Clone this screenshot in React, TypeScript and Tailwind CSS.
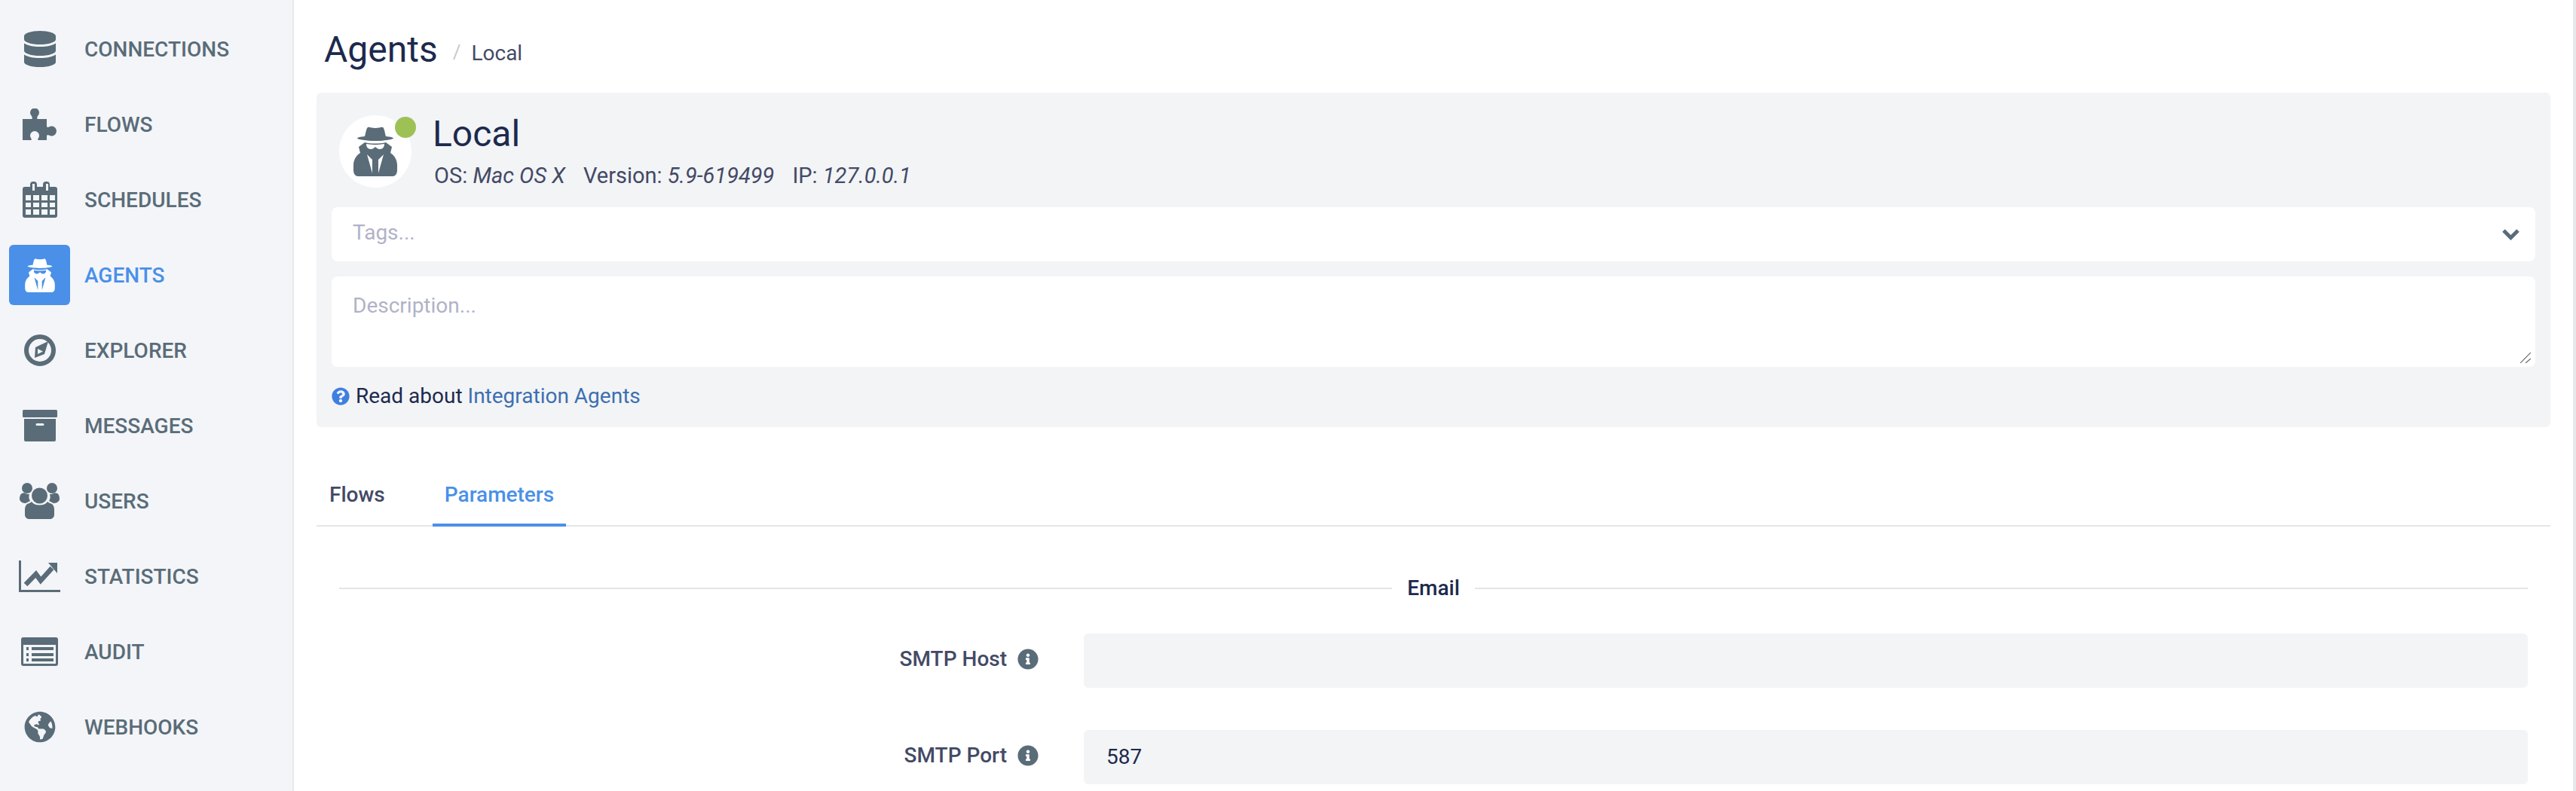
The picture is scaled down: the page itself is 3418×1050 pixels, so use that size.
import React from "react";
import { FaDatabase, FaGlobeAmericas, FaInfoCircle, FaQuestionCircle } from "react-icons/fa";

const Puzzle = () => (
  <svg width="46" height="42" viewBox="0 0 46 42" fill="currentColor">
    <path d="M0 14H12C13 14 13 12 12 10A6 6 0 1 1 20 10C19 12 19 14 20 14H32V24C32 25 34 25 35 24.500A6.500 6.500 0 1 1 35 35.500C34 35 32 35 32 36V42H21C20 42 20 41 20.500 40A6 6 0 1 0 11.500 40C12 41 12 42 11 42H0Z" />
  </svg>
);
const Calendar = () => (
  <svg width="46" height="48" viewBox="0 0 46 48" fill="currentColor">
    <path fillRule="evenodd" d="M3 7h7V4a4 4 0 0 1 4-4h1a4 4 0 0 1 4 4v3h8V4a4 4 0 0 1 4-4h1a4 4 0 0 1 4 4v3h7a3 3 0 0 1 3 3v35a3 3 0 0 1-3 3H3a3 3 0 0 1-3-3V10a3 3 0 0 1 3-3zM13 3v9h3V3h-3zM31 3v9h3V3h-3zM4 18v7h7v-7H4zm10 0v7h8v-7h-8zm11 0v7h8v-7h-8zm11 0v7h7v-7h-7zM4 28v6h7v-6H4zm10 0v6h8v-6h-8zm11 0v6h8v-6h-8zm11 0v6h7v-6h-7zM4 37v7h7v-7H4zm10 0v7h8v-7h-8zm11 0v7h8v-7h-8zm11 0v7h7v-7h-7z" />
  </svg>
);
const Compass = () => (
  <svg width="42" height="42" viewBox="0 0 42 42" fill="currentColor">
    <circle cx="21" cy="21" r="18" fill="none" stroke="currentColor" strokeWidth="6" />
    <path fillRule="evenodd" d="M14 31l1-14 17-8-5 17-13 5zm4-12v7l7-3.500-7-3.500z" />
  </svg>
);
const Archive = () => (
  <svg width="46" height="42" viewBox="0 0 46 42" fill="currentColor">
    <rect x="0" y="0" width="46" height="10" rx="1.500" />
    <path fillRule="evenodd" d="M2 12h42v28a2 2 0 0 1-2 2H4a2 2 0 0 1-2-2V12zm17 6a1.500 1.500 0 0 0 0 3h8a1.500 1.500 0 0 0 0-3h-8z" />
  </svg>
);
const Users = () => (
  <svg width="53" height="48" viewBox="0 0 53 48" fill="currentColor">
    <circle cx="10" cy="7" r="7" />
    <circle cx="43" cy="7" r="7" />
    <path d="M3 14c2-1 4-1 5 0 1 1 4 1 5 1-1 3-1 6 1 9-2 1-4 2-6 3-2 0-8-1-8-6 0-3 1-6 3-7z" />
    <path d="M50 14c-2-1-4-1-5 0-1 1-4 1-5 1 1 3 1 6-1 9 2 1 4 2 6 3 2 0 8-1 8-6 0-3-1-6-3-7z" />
    <circle cx="26.500" cy="17" r="10.500" />
    <path d="M10 28c3-1 5-2 6-3 2 3 6 4.500 10.500 4.500S35 28 37 25c1 1 3 2 6 3 2 2 3 4 3 8v6c0 4-3 6-6 6H13c-3 0-6-2-6-6v-6c0-4 1-6 3-8z" />
  </svg>
);
const Chart = () => (
  <svg width="55" height="42" viewBox="0 0 55 42" fill="currentColor">
    <path d="M0 0h3v39h52v3H0z" />
    <path d="M9 32l13.700-14 6.300 8.700L44 10" fill="none" stroke="currentColor" strokeWidth="6.500" />
    <path d="M39 3h12v14z" />
  </svg>
);
const Audit = () => (
  <svg width="49" height="38" viewBox="0 0 49 38" fill="currentColor">
    <path fillRule="evenodd" d="M3 0h43a3 3 0 0 1 3 3v32a3 3 0 0 1-3 3H3a3 3 0 0 1-3-3V3a3 3 0 0 1 3-3zM3 10v25h43V10H3zM7 13v4h3v-4H7zM14 13v4h29v-4H14zM7 21v4h3v-4H7zM14 21v4h29v-4H14zM7 28v4h3v-4H7zM14 28v4h29v-4H14z" />
  </svg>
);
const Secret = ({ w, h }: { w: number; h: number }) => (
  <svg width={w} height={h} viewBox="0 0 58 66" fill="currentColor">
    <path d="M19 1c2-1 5 1 10 1s8-2 10-1c2 1 3 9 4 12 6 .5 10 1.500 10 2.500 0 1.500-12 3.500-24 3.500S5 17 5 15.500c0-1 4-2 10-2.500 1-3 2-11 4-12z" />
    <path
      fillRule="evenodd"
      d="M7 27l8-6c8 2 20 2 28 0l8 6-2 8c5 3 9 9 9 16v7c0 4-2 8-6 8H6c-4 0-6-4-6-8v-7c0-7 4-13 9-16zM17 23c0 4 2 7 6 7 3 0 4-2 6-3 2 1 3 3 6 3 4 0 6-3 6-7-8 1.500-16 1.500-24 0zM18 37l7 7v18zM40 37l-7 7v18z"
    />
  </svg>
);
const Chevron = () => (
  <svg width="23" height="16" viewBox="0 0 23 16" fill="none" stroke="#5a6c78" strokeWidth="5">
    <path d="M2 3l9.500 9.500L21 3" />
  </svg>
);

const items: { label: string; icon: React.ReactNode; active?: boolean }[] = [
  { label: "CONNECTIONS", icon: <FaDatabase className="w-[42px] h-[48px]" /> },
  { label: "FLOWS", icon: <Puzzle /> },
  { label: "SCHEDULES", icon: <Calendar /> },
  { label: "AGENTS", icon: <Secret w={40} h={45} />, active: true },
  { label: "EXPLORER", icon: <Compass /> },
  { label: "MESSAGES", icon: <Archive /> },
  { label: "USERS", icon: <Users /> },
  { label: "STATISTICS", icon: <Chart /> },
  { label: "AUDIT", icon: <Audit /> },
  { label: "WEBHOOKS", icon: <FaGlobeAmericas className="w-[42px] h-[42px]" /> },
];

const Field = ({ label, value }: { label: string; value?: string }) => (
  <div className="flex items-center h-[72px]">
    <div className="w-[958px] shrink-0 flex items-center justify-end gap-[14px] text-[28px] font-medium text-[#434a66]">
      <span className="-translate-y-[2px]">{label}</span>
      <FaInfoCircle className="w-[28px] h-[28px] text-[#5a6c78] -translate-y-[2px]" />
    </div>
    <div className="ml-[60px] flex-1 h-[72px] rounded-[6px] bg-[#f3f4f6] pl-[30px] flex items-center text-[28px] text-[#1c2a4d]">
      {value}
    </div>
  </div>
);

export default function App() {
  return (
    <div className="flex h-[1050px] w-full overflow-hidden bg-white font-['Roboto',sans-serif]">
      <aside className="w-[390px] shrink-0 bg-[#f3f5f8] border-r-2 border-[#e6e8eb] pt-[15px] flex flex-col">
        {items.map((it) => (
          <div key={it.label} className="h-[100px] flex items-center pl-3 gap-[19px]">
            <div
              className={
                it.active
                  ? "w-[81px] h-[80px] rounded-[6px] bg-[#4a90e8] text-white flex items-center justify-center"
                  : "w-[81px] h-[80px] text-[#5a6c78] flex items-center justify-center"
              }
            >
              {it.icon}
            </div>
            <span className={it.active ? "translate-y-px text-[28px] font-medium text-[#4a90e8]" : "translate-y-px text-[28px] font-medium text-[#5a6c78]"}>
              {it.label}
            </span>
          </div>
        ))}
      </aside>
      <main className="flex-1 min-w-0 flex flex-col pl-[30px] pr-[30px] border-r-4 border-[#e6e8eb]">
        <div className="h-[123px] flex items-center pl-[10px] pt-[8px] text-[#1c2a4d]">
          <span className="text-[48px] leading-none">Agents</span>
          <span className="ml-[20px] mt-[8px] text-[26px] text-[#c8cad0]">/</span>
          <span className="ml-[14px] mt-[10px] text-[28px] text-[#434a66]">Local</span>
        </div>
        <section className="h-[444px] rounded-[6px] bg-[#f3f4f6] px-[20px] pt-[30px] flex flex-col">
          <div className="flex h-[96px] pl-[10px]">
            <div className="relative w-[96px] h-[96px] shrink-0 rounded-full bg-white flex items-center justify-center text-[#5a6c78]">
              <Secret w={58} h={66} />
              <span className="absolute left-[74px] top-[2px] w-[28px] h-[28px] rounded-full bg-[#9ec155]" />
            </div>
            <div className="ml-[30px] flex flex-col">
              <div className="-ml-[2px] text-[48px] leading-[50px] text-[#1c2a4d]">Local</div>
              <div className="mt-[12px] flex gap-[24px] text-[29px] leading-[36px] text-[#434a66]">
                <span>OS: <i>Mac OS X</i></span>
                <span>Version: <i>5.9-619499</i></span>
                <span>IP: <i>127.0.0.1</i></span>
              </div>
            </div>
          </div>
          <div className="mt-[26px] h-[72px] rounded-[8px] bg-white flex items-center justify-between pl-[28px] pr-[21px] text-[28px] text-[#b0b3c7]">
            <span className="-translate-y-[2px]">Tags...</span>
            <Chevron />
          </div>
          <div className="relative mt-[20px] h-[120px]">
            <textarea
              className="w-full h-[120px] block resize-none rounded-[8px] bg-white px-[28px] py-[18px] text-[28px] text-[#1c2a4d] placeholder:text-[#b0b3c7] outline-none"
              placeholder="Description..."
            />
            <svg className="absolute right-[6px] bottom-[5px]" width="14" height="14" viewBox="0 0 14 14" fill="none" stroke="#666" strokeWidth="1.200">
              <path d="M0 14L14 0M7 14l7-6" />
            </svg>
          </div>
          <div className="mt-[18px] flex items-center text-[28px] text-[#1c2a4d]">
            <FaQuestionCircle className="w-[24px] h-[24px] text-[#3f7fe0] mr-[8px]" />
            <span>Read about&nbsp;</span>
            <span className="text-[#3d6fb0]">Integration Agents</span>
          </div>
        </section>
        <div className="mt-[68px] h-[64px] flex border-b-2 border-[#e4e5e7] text-[28px] font-medium">
          <div className="w-[154px] pl-[17px] pt-[1px] text-[#434a66]">Flows</div>
          <div className="w-[177px] h-[64px] text-center pt-[1px] text-[#4a90e8] border-b-4 border-[#4a90e8]">Parameters</div>
        </div>
        <div className="mt-[67px] h-[30px] px-[30px] flex items-center gap-[20px]">
          <div className="flex-1 h-[2px] bg-[#e4e5e7]" />
          <span className="text-[28px] font-medium text-[#1c2a4d]">Email</span>
          <div className="flex-1 h-[2px] bg-[#e4e5e7]" />
        </div>
        <div className="mt-[45px] pr-[30px] flex flex-col gap-[56px]">
          <Field label="SMTP Host" />
          <Field label="SMTP Port" value="587" />
        </div>
      </main>
    </div>
  );
}
